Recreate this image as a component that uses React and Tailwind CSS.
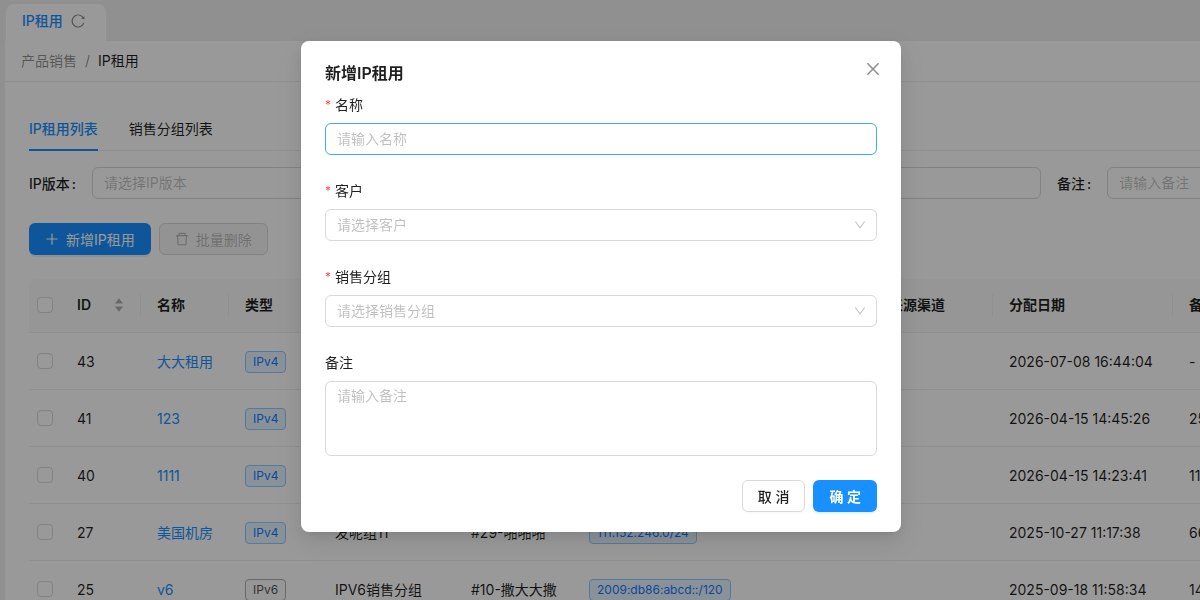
import React from "react";
import { AiOutlineClose, AiOutlineDelete, AiOutlineDown, AiOutlinePlus, AiOutlineReload } from "react-icons/ai";

// Trims the built-in margin of the Ant icons
const ICON_BOX = "64 64 896 896";

const columns = [
  { title: "ID", width: "w-[80px]", sorter: true },
  { title: "名称", width: "w-[88px]" },
  { title: "类型", width: "w-[90px]" },
  { title: "销售分组", width: "w-[136px]" },
  { title: "客户", width: "w-[118px]" },
  { title: "IP段", width: "w-[300px]" },
  { title: "来源渠道", width: "w-[120px]" },
  { title: "分配日期", width: "w-[180px]" },
  { title: "备注", width: "w-[380px]" },
];

const rows = [
  { id: 43, name: "大大租用", type: "IPv4", date: "2026-07-08 16:44:04", remark: "-" },
  { id: 41, name: "123", type: "IPv4", date: "2026-04-15 14:45:26", remark: "25" },
  { id: 40, name: "1111", type: "IPv4", date: "2026-04-15 14:23:41", remark: "11" },
  { id: 27, name: "美国机房", type: "IPv4", group: "发呢组11", customer: "#29-啪啪啪", ip: "111.152.246.0/24", date: "2025-10-27 11:17:38", remark: "66" },
  { id: 25, name: "v6", type: "IPv6", group: "IPV6销售分组", customer: "#10-撒大大撒", ip: "2009:db86:abcd::/120", date: "2025-09-18 11:58:34", remark: "14" },
];

const Tag = ({ blue, children }) => (
  <span
    className={`inline-block rounded border px-[7px] text-xs leading-5 ${
      blue ? "border-[#91caff] bg-[#e6f4ff] text-[#1677ff]" : "border-[#b0b0b0] bg-[#fafafa] text-black/70"
    }`}
  >
    {children}
  </span>
);

const Checkbox = ({ label }) => (
  <input
    type="checkbox"
    aria-label={label}
    className="block h-4 w-4 appearance-none rounded border border-[#d9d9d9] bg-white"
  />
);

const Sorter = () => (
  <svg viewBox="0 0 10 16" className="h-4 w-2.5 fill-black/30" aria-hidden="true">
    <path d="M5 1.2 9 6.4H1z" />
    <path d="M5 14.8 1 9.6h8z" />
  </svg>
);

const Filter = ({ id, label, children }) => (
  <div className="flex w-[498px] shrink-0 items-center">
    <label htmlFor={id} className="mr-4 pt-0.5 font-medium whitespace-nowrap">
      {label}
      <span className="ml-0.5">:</span>
    </label>
    {children}
  </div>
);

const Field = ({ id, label, required, children }) => (
  <div className="flex flex-col gap-2">
    <label htmlFor={id} className="flex h-[22px] items-center gap-1 pt-0.5">
      {required && <span className="text-xs text-[#ff4d4f]">*</span>}
      {label}
    </label>
    {children}
  </div>
);

const Select = ({ id, placeholder }) => (
  <div className="relative w-full">
    <select
      id={id}
      defaultValue=""
      className="block h-8 w-full appearance-none rounded-md border border-[#d9d9d9] bg-white px-[11px] text-black/25"
    >
      <option value="" disabled>{placeholder}</option>
    </select>
    <AiOutlineDown viewBox={ICON_BOX} className="pointer-events-none absolute top-2.5 right-[11px] h-3 w-3 text-black/25" />
  </div>
);

const inputClass =
  "block w-full rounded-md border bg-white px-[11px] placeholder:text-black/25 outline-none";

const RentalModal = () => (
  <div className="fixed inset-0 flex items-start justify-center bg-black/40 pt-[41px] pl-0.5">
    <div
      role="dialog"
      aria-modal="true"
      aria-labelledby="modal-title"
      className="w-full max-w-[600px] rounded-lg bg-white px-6 py-5 shadow-[0_6px_16px_0_rgba(0,0,0,0.08),0_3px_6px_-4px_rgba(0,0,0,0.12),0_9px_28px_8px_rgba(0,0,0,0.05)]"
    >
      <div className="mb-2 flex h-6 items-center justify-between">
        <h2 id="modal-title" className="text-base font-semibold">新增IP租用</h2>
        <button type="button" aria-label="关闭" className="-mr-1 pb-2 text-black/45">
          <AiOutlineClose viewBox={ICON_BOX} className="h-4 w-4" />
        </button>
      </div>

      <form>
        <div className="flex flex-col gap-6">
          <Field id="name" label="名称" required>
            <input id="name" placeholder="请输入名称" className={`${inputClass} h-8 border-[#40a9ff] pb-0.5`} />
          </Field>
          <Field id="customer" label="客户" required>
            <Select id="customer" placeholder="请选择客户" />
          </Field>
          <Field id="group" label="销售分组" required>
            <Select id="group" placeholder="请选择销售分组" />
          </Field>
          <Field id="remark" label="备注">
            <textarea
              id="remark"
              placeholder="请输入备注"
              className={`${inputClass} h-[75px] resize-none border-[#d9d9d9] py-[3px] leading-[22px]`}
            />
          </Field>
        </div>

        <div className="mt-6 flex justify-end gap-2">
          <button type="button" className="h-8 rounded-md border border-[#d9d9d9] bg-white px-[15px] pt-0.5 font-medium shadow-[0_2px_0_rgba(0,0,0,0.02)]">
            取 消
          </button>
          <button type="submit" className="h-8 rounded-md bg-[#1890ff] px-4 pt-0.5 font-semibold text-white shadow-[0_2px_0_rgba(5,145,255,0.1)]">
            确 定
          </button>
        </div>
      </form>
    </div>
  </div>
);

export default function App() {
  return (
    <div className="h-screen overflow-hidden bg-[#f0f0f0] pl-[5px] font-['Inter','Noto_Sans_CJK_SC',sans-serif] text-sm text-black/88">
      {/* Page tabs */}
      <nav className="flex pt-1 pl-px">
        <a href="#rental" className="flex h-[37px] w-[100px] items-center gap-2 rounded-t-lg bg-white px-4 pb-1 font-medium text-[#1890ff]">
          IP租用
          <AiOutlineReload viewBox={ICON_BOX} className="h-3.5 w-3.5 text-black/45" />
        </a>
      </nav>

      <main className="min-h-full w-max min-w-full bg-white">
        <div className="flex h-[41px] items-center gap-2 border-b border-[#f0f0f0] px-4">
          <a href="#sales" className="text-black/45">产品销售</a>
          <span className="text-black/45">/</span>
          <span>IP租用</span>
        </div>

        <div className="px-6 pt-6">
          <div className="flex h-[45px] gap-[31px] border-b border-[#f0f0f0]">
            <button type="button" className="-mb-px border-b-2 border-[#1890ff] pt-0.5 font-medium text-[#1890ff]">IP租用列表</button>
            <button type="button" className="pt-0.5">销售分组列表</button>
          </div>

          {/* Filters */}
          <div className="mt-4 flex gap-4">
            <Filter id="f-version" label="IP版本">
              <Select id="f-version" placeholder="请选择IP版本" />
            </Filter>
            <Filter id="f-name" label="名称">
              <input id="f-name" className={`${inputClass} h-8 border-[#d9d9d9]`} />
            </Filter>
            <Filter id="f-remark" label="备注">
              <input id="f-remark" placeholder="请输入备注" className={`${inputClass} h-8 border-[#d9d9d9] pb-0.5`} />
            </Filter>
          </div>

          <div className="mt-6 flex gap-2">
            <button type="button" className="flex h-8 items-center gap-[7px] rounded-md bg-[#1890ff] px-4 text-white shadow-[0_2px_0_rgba(5,145,255,0.1)]">
              <AiOutlinePlus viewBox={ICON_BOX} className="h-3.5 w-3.5" />
              <span className="pt-0.5">新增IP租用</span>
            </button>
            <button type="button" disabled className="flex h-8 items-center gap-[7px] rounded-md border border-[#d9d9d9] bg-black/4 px-[15px] text-black/25">
              <AiOutlineDelete viewBox={ICON_BOX} className="h-3.5 w-3.5" />
              <span className="pt-0.5">批量删除</span>
            </button>
          </div>

          <table className="mt-6 w-[1524px] table-fixed text-left">
            <thead>
              <tr className="h-[53px] border-b border-[#f0f0f0] bg-[#fafafa]">
                <th className="w-8 rounded-tl-lg pl-2"><Checkbox label="全选" /></th>
                {columns.map((col) => (
                  <th key={col.title} className={`${col.width} p-0 font-semibold`}>
                    <div className="flex h-[22px] items-center justify-between border-r border-[#f0f0f0] pr-4 pl-4">
                      {col.title}
                      {col.sorter && <Sorter />}
                    </div>
                  </th>
                ))}
              </tr>
            </thead>
            <tbody>
              {rows.map((row) => (
                <tr key={row.id} className="h-[57px] border-b border-[#f0f0f0]">
                  <td className="pl-2"><Checkbox label={`选择 ${row.id}`} /></td>
                  <td className="px-4 pt-0.5">{row.id}</td>
                  <td className="px-4 pt-0.5"><a href="#detail" className="whitespace-nowrap text-[#1890ff]">{row.name}</a></td>
                  <td className="px-4 pt-0.5"><Tag blue={row.type === "IPv4"}>{row.type}</Tag></td>
                  <td className="px-4 pt-0.5">{row.group}</td>
                  <td className="px-4 pt-0.5 whitespace-nowrap">{row.customer}</td>
                  <td className="px-4 pt-0.5">{row.ip && <Tag blue>{row.ip}</Tag>}</td>
                  <td className="px-4 pt-0.5"></td>
                  <td className="px-4 pt-0.5 whitespace-nowrap">{row.date}</td>
                  <td className="px-4 pt-0.5">{row.remark}</td>
                </tr>
              ))}
            </tbody>
          </table>
        </div>
      </main>

      <RentalModal />
    </div>
  );
}
